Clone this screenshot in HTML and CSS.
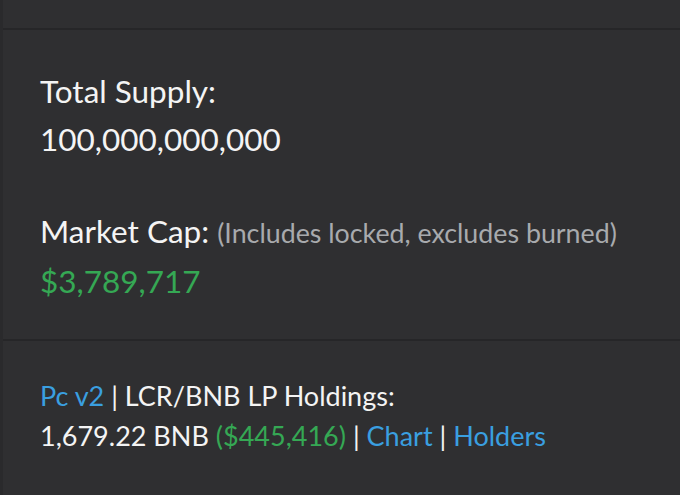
FILE: index.html
```html
<!DOCTYPE html>
<html>
<head>
<meta charset="utf-8">
<link rel="stylesheet" href="styles.css">
</head>
<body>
<div class="page">
  <div class="section top"></div>
  <div class="section stats">
    <div class="row">
      <div class="label">Total Supply:</div>
      <div class="value">100,000,000,000</div>
    </div>
    <div class="row">
      <div class="label">Market Cap: <span class="note">(Includes locked, excludes burned)</span></div>
      <div class="value green">$3,789,717</div>
    </div>
  </div>
  <div class="section lp">
    <div class="line"><a class="link">Pc v2</a> | LCR/BNB LP Holdings:</div>
    <div class="line">1,679.22 BNB <span class="green">($445,416)</span> | <a class="link">Chart</a> | <a class="link">Holders</a></div>
  </div>
</div>
</body>
</html>
```

FILE: styles.css
```css
html, body {
  margin: 0;
  padding: 0;
  background: #2f2f31;
}
.page {
  width: 680px;
  height: 495px;
  overflow: hidden;
  border-left: 3px solid #2a2a2c;
  box-sizing: border-box;
  font-family: Lato, "Open Sans", sans-serif;
  color: #f4f4f4;
}
.section {
  border-bottom: 2px solid #262628;
}
.top {
  height: 28px;
}
.stats {
  padding: 37px 0 34px 37px;
  display: flex;
  flex-direction: column;
  gap: 44px;
  font-size: 31.5px;
}
.row {
  line-height: 48px;
}
.note {
  color: #a8aaad;
  font-size: 26.8px;
}
.green {
  color: #35a854;
}
.lp {
  padding: 35px 0 0 37px;
  border-bottom: none;
  font-size: 27px;
}
.line {
  line-height: 40px;
}
.link {
  color: #3a9fe0;
}
```
